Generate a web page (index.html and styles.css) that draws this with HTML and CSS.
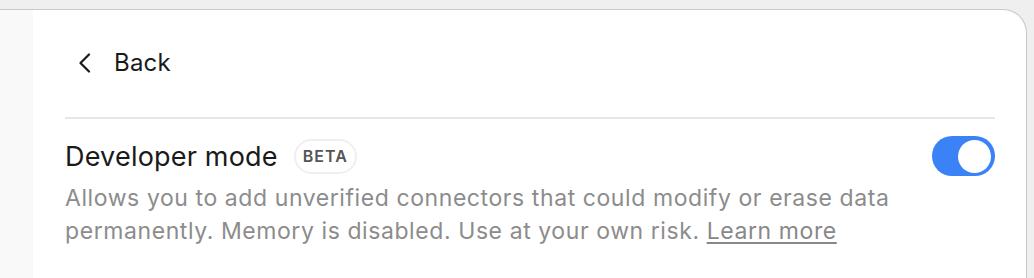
FILE: index.html
```html
<!DOCTYPE html>
<html>
<head>
<meta charset="utf-8">
<link rel="stylesheet" href="styles.css">
</head>
<body>
<div class="window">
  <aside class="sidebar"></aside>
  <main class="main">
    <div class="back-row">
      <button class="back-btn">
        <svg class="chev" width="14" height="20" viewBox="0 0 14 20"><path d="M11 1.5 L2.5 10 L11 18.5" fill="none" stroke="#1a1a1a" stroke-width="2.2" stroke-linecap="round" stroke-linejoin="round"/></svg>
        <span>Back</span>
      </button>
    </div>
    <div class="divider"></div>
    <section class="setting">
      <div class="setting-head">
        <div class="title-wrap">
          <span class="title">Developer mode</span>
          <span class="badge">BETA</span>
        </div>
        <div class="toggle"><div class="knob"></div></div>
      </div>
      <p class="desc">Allows you to add unverified connectors that could modify or erase data permanently. Memory is disabled. Use at your own risk. <a class="link" href="#">Learn more</a></p>
    </section>
  </main>
</div>
</body>
</html>
```

FILE: styles.css
```css
* { box-sizing: border-box; }
html, body { margin: 0; padding: 0; }
body {
  background: #efefef;
  font-family: Inter, "Noto Sans", sans-serif;
  width: 1034px;
  height: 278px;
  overflow: hidden;
}
.window {
  margin-top: 9px;
  width: 1027px;
  height: 269px;
  background: #ffffff;
  border-top: 1px solid #c9c9c9;
  border-right: 1px solid #c6c6c6;
  border-top-right-radius: 24px;
  display: flex;
  overflow: hidden;
}
.sidebar {
  width: 33px;
  flex: none;
  background: #f9f9f9;
}
.main {
  flex: 1;
  padding: 0 31px 0 32px;
}
.back-row {
  height: 107px;
  display: flex;
  align-items: center;
  padding-bottom: 2px;
}
.back-btn {
  display: flex;
  align-items: center;
  gap: 22px;
  background: none;
  border: none;
  padding: 0 0 0 13px;
  font-family: inherit;
  font-size: 24px;
  letter-spacing: 0.2px;
  color: #1a1a1a;
  cursor: pointer;
}
.chev { display: block; }
.divider {
  height: 2px;
  background: #e6e6e6;
}
.setting {
  padding-top: 17px;
}
.setting-head {
  display: flex;
  align-items: center;
  justify-content: space-between;
  height: 40px;
}
.title-wrap {
  display: flex;
  align-items: center;
  gap: 16px;
}
.title {
  font-size: 27px;
  letter-spacing: 0.2px;
  color: #1a1a1a;
}
.badge {
  display: inline-flex;
  align-items: center;
  justify-content: center;
  height: 35px;
  padding: 0 7px;
  border: 2px solid #efefef;
  border-radius: 18px;
  font-size: 16px;
  font-weight: 600;
  letter-spacing: 1px;
  color: #555555;
}
.toggle {
  width: 63px;
  height: 40px;
  border-radius: 20px;
  background: #3b82f6;
  display: flex;
  align-items: center;
  justify-content: flex-end;
  padding-right: 4px;
}
.knob {
  width: 33px;
  height: 33px;
  border-radius: 50%;
  background: #ffffff;
}
.desc {
  margin: 6px 0 0 0;
  font-size: 23px;
  letter-spacing: 0.58px;
  line-height: 33px;
  color: #8c8c8c;
  max-width: 900px;
}
.link {
  color: #888888;
  text-decoration: underline;
  text-decoration-thickness: 2px;
  text-underline-offset: 3px;
}
```
